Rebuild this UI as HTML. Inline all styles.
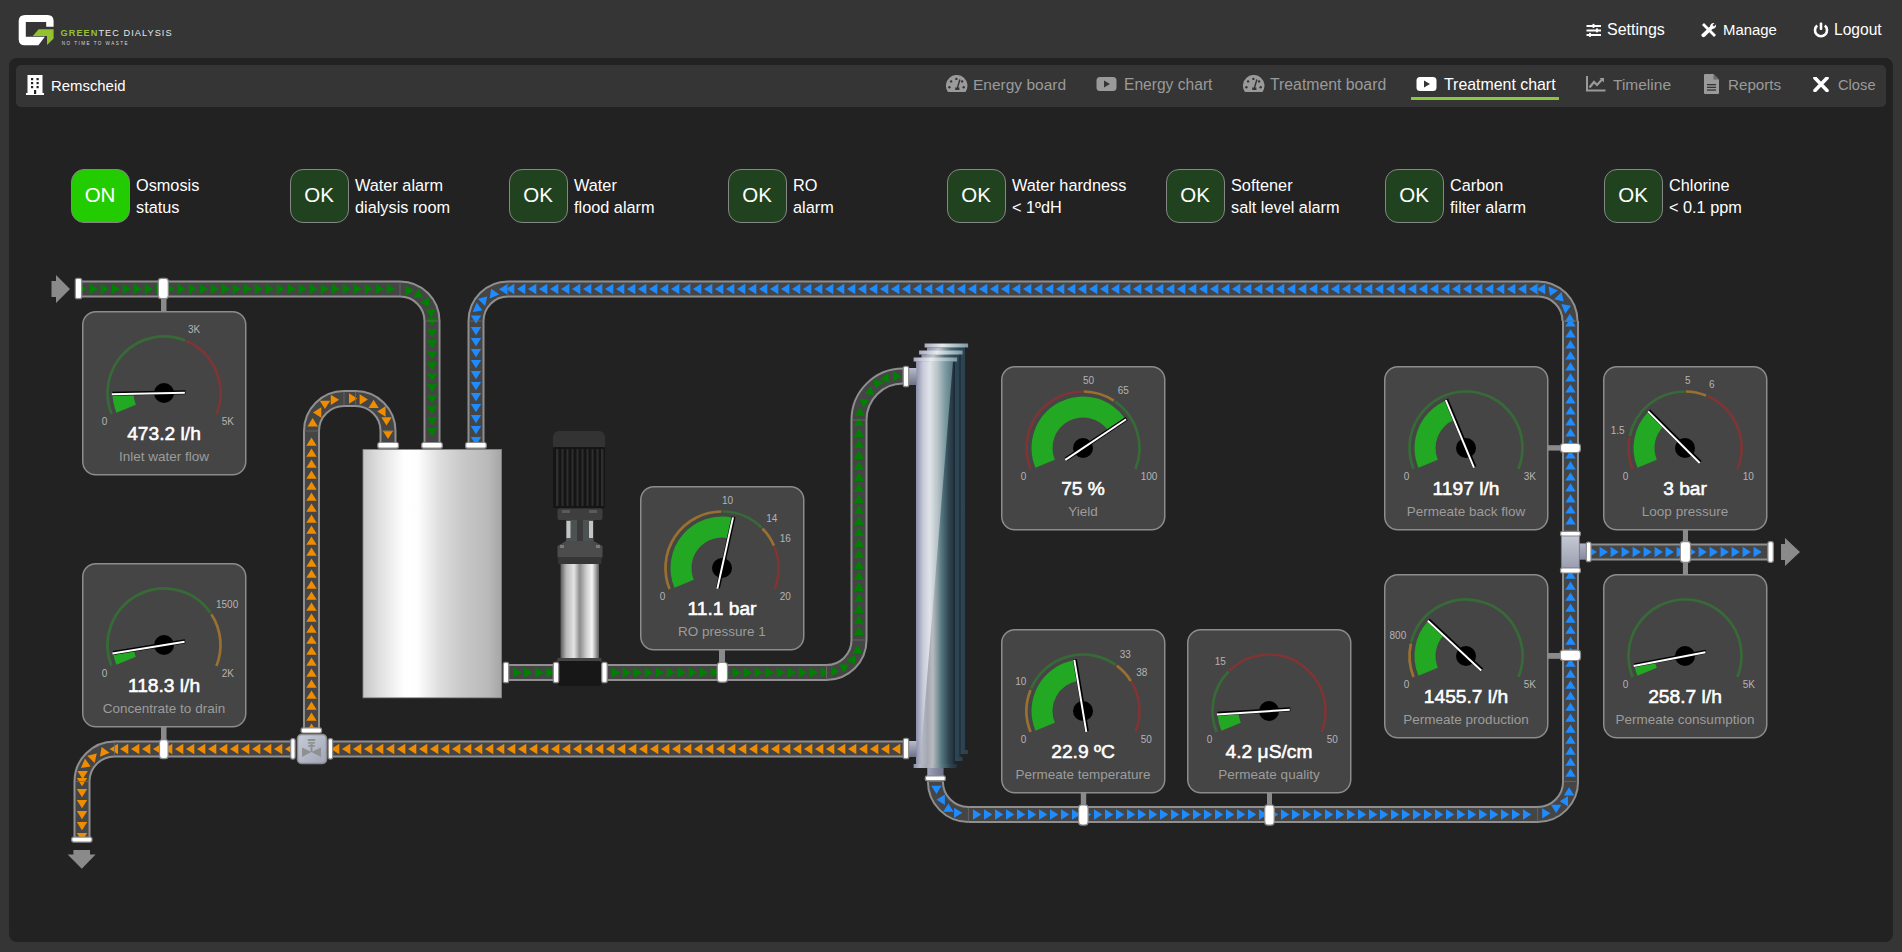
<!DOCTYPE html>
<html><head><meta charset="utf-8"><title>Treatment chart</title>
<style>
html,body{margin:0;padding:0}
body{width:1902px;height:952px;background:#353535;overflow:hidden;position:relative;font-family:"Liberation Sans",sans-serif;color:#fff}
.abs{position:absolute}
.menu{position:absolute;top:20px;font-size:16px;color:#fff;white-space:nowrap;line-height:20px}
.panel{position:absolute;left:9px;top:58px;width:1884px;height:884px;background:#222;border-radius:8px}
.bar{position:absolute;left:16px;top:65px;width:1870px;height:42px;background:#353535;border-radius:5px}
.tab{position:absolute;top:75px;font-size:16px;color:#9a9a9a;white-space:nowrap;line-height:20px}
.st{position:absolute;top:168.5px;width:57px;height:52px;border:1.5px solid #868686;border-radius:13px;background:#21421f;color:#fff;font-size:20.5px;line-height:50px;text-align:center}
.sl{position:absolute;top:173.8px;font-size:16.3px;line-height:22px;color:#fff;white-space:nowrap}
svg text{font-family:"Liberation Sans",sans-serif}
</style></head><body>

<svg class="abs" style="left:0;top:0" width="200" height="58" viewBox="0 0 200 58">
<path d="M25 15 H47.6 Q53.6 15 53.6 21 V26.8 H46.2 V22.1 H25.8 V36.8 H44.9 L38.4 45.2 H24.7 Q18.7 45.2 18.7 39.2 V21 Q18.7 15 25 15 Z" fill="#fff"/>
<path d="M38.6 29.2 H53.6 V38.6 L47 44.9 V36 H32.8 Z" fill="#94c12f"/>
<text x="60.5" y="36" font-size="9.2" letter-spacing="1.05" fill="#94c12f" font-weight="bold">GREEN<tspan fill="#e6e6e6" font-weight="normal">TEC DIALYSIS</tspan></text>
<text x="61.8" y="45.3" font-size="4.6" letter-spacing="1.45" fill="#d8d8d8">NO TIME TO WASTE</text>
</svg>
<div class="menu" style="left:1586px">
<svg width="16" height="16" viewBox="0 0 16 16" style="position:absolute;left:0;top:2px"><g fill="#fff"><rect x="0.5" y="3" width="14.5" height="2"/><rect x="0.5" y="7.5" width="14.5" height="2"/><rect x="0.5" y="12" width="14.5" height="2"/><rect x="6.5" y="1.8" width="2" height="4.2" rx="0.8"/><rect x="10" y="6.3" width="2" height="4.2" rx="0.8"/><rect x="3" y="10.8" width="2" height="4.2" rx="0.8"/></g></svg>
<span style="position:absolute;left:21px">Settings</span></div>
<div class="menu" style="left:1701px">
<svg width="16" height="16" viewBox="0 0 16 16" style="position:absolute;left:0;top:2px"><g fill="#fff"><path d="M1 3 L3 1 L13 11 L15 13 L13 15 L11 13 Z"/><path d="M9 4.5 Q9.5 0.5 13.5 1 L11.5 3 L13 4.5 L15 2.5 Q15.5 6.5 11.5 7 L4 14.5 Q2.5 16 1 14.5 Q-0.5 13 1.5 11.5 Z"/></g></svg>
<span style="position:absolute;left:22px;font-size:14.9px">Manage</span></div>
<div class="menu" style="left:1813px">
<svg width="16" height="16" viewBox="0 0 16 16" style="position:absolute;left:0;top:2px"><path d="M4.2 3.6 A6 6 0 1 0 11.8 3.6" stroke="#fff" stroke-width="2.6" fill="none"/><rect x="6.7" y="0.5" width="2.6" height="7.5" rx="1" fill="#fff"/></svg>
<span style="position:absolute;left:21px;font-size:15.6px">Logout</span></div>
<div class="panel"></div><div class="bar"></div>
<svg class="abs" style="left:26px;top:75px" width="18" height="20" viewBox="0 0 18 20">
<rect x="1.5" y="0" width="15" height="19" fill="#fff"/><rect x="0" y="18" width="18" height="2" fill="#fff"/>
<g fill="#222"><rect x="5" y="3" width="2.2" height="2.2"/><rect x="10.5" y="3" width="2.2" height="2.2"/><rect x="5" y="7" width="2.2" height="2.2"/><rect x="10.5" y="7" width="2.2" height="2.2"/><rect x="5" y="11" width="2.2" height="2.2"/><rect x="10.5" y="11" width="2.2" height="2.2"/><rect x="8" y="15" width="2.2" height="4"/></g></svg>
<div class="abs" style="left:51px;top:76px;font-size:14.9px;line-height:20px;color:#fff">Remscheid</div>
<svg class="abs" style="left:945px;top:75px" width="23" height="17" viewBox="0 0 23 17"><path d="M2.9 17 A10.8 10.8 0 1 1 20.5 17 Z" fill="#9a9a9a"/><g fill="#353535"><circle cx="11.4" cy="3.9" r="1.2"/><circle cx="6.1" cy="6.4" r="1.2"/><circle cx="17.1" cy="6.4" r="1.2"/><circle cx="4.4" cy="12.3" r="1.2"/><circle cx="18.7" cy="12.3" r="1.2"/><path d="M14.2 4.3 L15.6 4.8 L13.3 12.6 L14.4 12.6 L14.4 15 L10.2 15 L10.2 12.6 L11.8 12.6 Z"/></g></svg>
<div class="tab" style="left:973px;font-size:15.5px">Energy board</div>
<svg class="abs" style="left:1096px;top:76px" width="22" height="16" viewBox="0 0 22 16"><rect x="0.5" y="1" width="20" height="14" rx="3.5" fill="#9a9a9a"/><path d="M8 4.5 L14 8 L8 11.5 Z" fill="#353535"/></svg>
<div class="tab" style="left:1124px;font-size:15.6px">Energy chart</div>
<svg class="abs" style="left:1242px;top:75px" width="23" height="17" viewBox="0 0 23 17"><path d="M2.9 17 A10.8 10.8 0 1 1 20.5 17 Z" fill="#9a9a9a"/><g fill="#353535"><circle cx="11.4" cy="3.9" r="1.2"/><circle cx="6.1" cy="6.4" r="1.2"/><circle cx="17.1" cy="6.4" r="1.2"/><circle cx="4.4" cy="12.3" r="1.2"/><circle cx="18.7" cy="12.3" r="1.2"/><path d="M14.2 4.3 L15.6 4.8 L13.3 12.6 L14.4 12.6 L14.4 15 L10.2 15 L10.2 12.6 L11.8 12.6 Z"/></g></svg>
<div class="tab" style="left:1270px;font-size:15.8px">Treatment board</div>
<svg class="abs" style="left:1416px;top:76px" width="22" height="16" viewBox="0 0 22 16"><rect x="0.5" y="1" width="20" height="14" rx="3.5" fill="#fff"/><path d="M8 4.5 L14 8 L8 11.5 Z" fill="#353535"/></svg>
<div class="tab" style="left:1444px;color:#fff;font-size:15.9px">Treatment chart</div>
<div class="abs" style="left:1411px;top:97px;width:148px;height:3px;background:#8dc63f"></div>
<svg class="abs" style="left:1586px;top:76px" width="20" height="16" viewBox="0 0 20 16"><path d="M1 0 V14.5 H19.5" stroke="#9a9a9a" stroke-width="2" fill="none"/><path d="M3.5 11.5 L8 6 L11 9 L16.5 3" stroke="#9a9a9a" stroke-width="2.2" fill="none"/><path d="M13.5 2 H18 V6.5 Z" fill="#9a9a9a"/></svg>
<div class="tab" style="left:1613px;font-size:15.5px">Timeline</div>
<svg class="abs" style="left:1703px;top:74px" width="17" height="20" viewBox="0 0 17 20"><path d="M1 1 Q1 0 2 0 H10.5 L16 5.5 V19 Q16 20 15 20 H2 Q1 20 1 19 Z" fill="#9a9a9a"/><path d="M10.5 0 V5.5 H16" fill="#6a6a6a"/><g fill="#353535"><rect x="4" y="10" width="9" height="1.3"/><rect x="4" y="12.7" width="9" height="1.3"/><rect x="4" y="15.4" width="9" height="1.3"/></g></svg>
<div class="tab" style="left:1728px;font-size:15.2px">Reports</div>
<svg class="abs" style="left:1813px;top:77px" width="16" height="15" viewBox="0 0 16 15"><path d="M2 1 L14 13.5 M14 1 L2 13.5" stroke="#fff" stroke-width="3.6" stroke-linecap="round"/></svg>
<div class="tab" style="left:1838px;font-size:14.7px">Close</div>
<div class="st" style="left:70.5px;background:#22cc00">ON</div>
<div class="sl" style="left:136px">Osmosis<br>status</div>
<div class="st" style="left:289.5px;background:#21421f">OK</div>
<div class="sl" style="left:355px">Water alarm<br>dialysis room</div>
<div class="st" style="left:508.5px;background:#21421f">OK</div>
<div class="sl" style="left:574px">Water<br>flood alarm</div>
<div class="st" style="left:727.5px;background:#21421f">OK</div>
<div class="sl" style="left:793px">RO<br>alarm</div>
<div class="st" style="left:946.5px;background:#21421f">OK</div>
<div class="sl" style="left:1012px">Water hardness<br>&lt; 1&#186;dH</div>
<div class="st" style="left:1165.5px;background:#21421f">OK</div>
<div class="sl" style="left:1231px">Softener<br>salt level alarm</div>
<div class="st" style="left:1384.5px;background:#21421f">OK</div>
<div class="sl" style="left:1450px">Carbon<br>filter alarm</div>
<div class="st" style="left:1603.5px;background:#21421f">OK</div>
<div class="sl" style="left:1669px">Chlorine<br>&lt; 0.1 ppm</div>
<svg class="abs" style="left:0;top:0" width="1902" height="952" viewBox="0 0 1902 952">
<defs>
<linearGradient id="tank" x1="0" x2="1" y1="0" y2="0">
<stop offset="0" stop-color="#c6c6c6"/><stop offset="0.1" stop-color="#dcdcdc"/><stop offset="0.25" stop-color="#f6f6f6"/><stop offset="0.3" stop-color="#ffffff"/>
<stop offset="0.4" stop-color="#fdfdfd"/><stop offset="0.55" stop-color="#dedede"/><stop offset="0.72" stop-color="#c8c8c8"/><stop offset="0.9" stop-color="#bababa"/><stop offset="1" stop-color="#a6a6a6"/></linearGradient>
<linearGradient id="memA" x1="0" x2="1" y1="0" y2="0">
<stop offset="0" stop-color="#8a8ea8"/><stop offset="0.15" stop-color="#b4b8c4"/><stop offset="0.3" stop-color="#a4a8b2"/><stop offset="0.43" stop-color="#b8bcc0"/>
<stop offset="0.65" stop-color="#567880"/><stop offset="0.85" stop-color="#2e4450"/><stop offset="1" stop-color="#22303c"/></linearGradient>
<linearGradient id="memB" gradientUnits="userSpaceOnUse" x1="916" x2="955" y1="0" y2="0">
<stop offset="0" stop-color="#8a8ea8"/><stop offset="0.18" stop-color="#c8cad8"/><stop offset="0.35" stop-color="#e0e4e8"/>
<stop offset="0.55" stop-color="#b8c4c8"/><stop offset="0.75" stop-color="#7d9aa2"/><stop offset="1" stop-color="#4e6e7a"/></linearGradient>
<linearGradient id="memback" x1="0" x2="1" y1="0" y2="0">
<stop offset="0" stop-color="#8a8ea8"/><stop offset="0.3" stop-color="#c0c4cc"/><stop offset="0.6" stop-color="#4e6c74"/><stop offset="0.85" stop-color="#2e4652"/><stop offset="1" stop-color="#2a4050"/></linearGradient>
<linearGradient id="flange" x1="0" x2="1" y1="0" y2="0">
<stop offset="0" stop-color="#a8acc0"/><stop offset="0.4" stop-color="#e8eaee"/><stop offset="0.75" stop-color="#a8bcc4"/><stop offset="1" stop-color="#7c98a4"/></linearGradient>
<linearGradient id="port" x1="0" x2="0" y1="0" y2="1">
<stop offset="0" stop-color="#b8bccb"/><stop offset="1" stop-color="#6e7288"/></linearGradient>
<linearGradient id="portv" x1="0" x2="1" y1="0" y2="0">
<stop offset="0" stop-color="#a0a4b8"/><stop offset="1" stop-color="#6e7288"/></linearGradient>
<linearGradient id="steel" x1="0" x2="1" y1="0" y2="0">
<stop offset="0" stop-color="#5a5a5a"/><stop offset="0.15" stop-color="#b8b8b8"/><stop offset="0.35" stop-color="#e4e4e4"/>
<stop offset="0.5" stop-color="#8c8c8c"/><stop offset="0.68" stop-color="#d0d0d0"/><stop offset="0.82" stop-color="#f4f4f4"/><stop offset="1" stop-color="#5c5c5c"/></linearGradient>
<linearGradient id="tbody" x1="0" x2="0" y1="0" y2="1">
<stop offset="0" stop-color="#c6cad6"/><stop offset="0.5" stop-color="#b0b4c2"/><stop offset="1" stop-color="#9a9eb0"/></linearGradient>
<linearGradient id="tside" x1="0" x2="0" y1="0" y2="1">
<stop offset="0" stop-color="#b0b4c4"/><stop offset="1" stop-color="#868aa0"/></linearGradient>
<linearGradient id="valve" x1="0" x2="1" y1="0" y2="1">
<stop offset="0" stop-color="#c8ccd8"/><stop offset="1" stop-color="#a0a6b8"/></linearGradient>
</defs>
<path d="M51.5 281 H56 V275 L70 289 L56 303 V297 H51.5 Z" fill="#8a8a8a"/>
<path d="M1781 544 H1785 V538 L1800 552 L1785 566 V560 H1781 Z" fill="#8a8a8a"/>
<path d="M73.4 850 H90 V854.5 H95.6 L81.8 868.7 L67.6 854.5 H73.4 Z" fill="#8a8a8a"/>
<path d="M82 289L400 289M400 289A32 32 0 0 1 432 321M432 321L432 443" stroke="#8f8f8f" stroke-width="17" fill="none"/>
<path d="M82 289L400 289M400 289A32 32 0 0 1 432 321M432 321L432 443" stroke="#454545" stroke-width="13" fill="none"/>
<polygon points="78.7,283.8 87,289 78.7,294.2" fill="#008000"/><polygon points="89.7,283.8 98,289 89.7,294.2" fill="#008000"/><polygon points="100.7,283.8 109,289 100.7,294.2" fill="#008000"/><polygon points="111.7,283.8 120,289 111.7,294.2" fill="#008000"/><polygon points="122.7,283.8 131,289 122.7,294.2" fill="#008000"/><polygon points="133.7,283.8 142,289 133.7,294.2" fill="#008000"/><polygon points="144.7,283.8 153,289 144.7,294.2" fill="#008000"/><polygon points="155.7,283.8 164,289 155.7,294.2" fill="#008000"/><polygon points="166.7,283.8 175,289 166.7,294.2" fill="#008000"/><polygon points="177.7,283.8 186,289 177.7,294.2" fill="#008000"/><polygon points="188.7,283.8 197,289 188.7,294.2" fill="#008000"/><polygon points="199.7,283.8 208,289 199.7,294.2" fill="#008000"/><polygon points="210.7,283.8 219,289 210.7,294.2" fill="#008000"/><polygon points="221.7,283.8 230,289 221.7,294.2" fill="#008000"/><polygon points="232.7,283.8 241,289 232.7,294.2" fill="#008000"/><polygon points="243.7,283.8 252,289 243.7,294.2" fill="#008000"/><polygon points="254.7,283.8 263,289 254.7,294.2" fill="#008000"/><polygon points="265.7,283.8 274,289 265.7,294.2" fill="#008000"/><polygon points="276.7,283.8 285,289 276.7,294.2" fill="#008000"/><polygon points="287.7,283.8 296,289 287.7,294.2" fill="#008000"/><polygon points="298.7,283.8 307,289 298.7,294.2" fill="#008000"/><polygon points="309.7,283.8 318,289 309.7,294.2" fill="#008000"/><polygon points="320.7,283.8 329,289 320.7,294.2" fill="#008000"/><polygon points="331.7,283.8 340,289 331.7,294.2" fill="#008000"/><polygon points="342.7,283.8 351,289 342.7,294.2" fill="#008000"/><polygon points="353.7,283.8 362,289 353.7,294.2" fill="#008000"/><polygon points="364.7,283.8 373,289 364.7,294.2" fill="#008000"/><polygon points="375.7,283.8 384,289 375.7,294.2" fill="#008000"/><polygon points="386.7,283.8 395,289 386.7,294.2" fill="#008000"/><polygon points="405.46,285.23 413.76,290.43 405.46,295.63" fill="#008000"/><polygon points="418.34,288.9 422.93,297.55 413.14,297.91" fill="#008000"/><polygon points="429.21,297.31 428.86,307.1 420.21,302.51" fill="#008000"/><polygon points="436.29,309.41 431.09,317.71 425.89,309.41" fill="#008000"/><polygon points="437.2,318.2 432,326.5 426.8,318.2" fill="#008000"/><polygon points="437.2,329.2 432,337.5 426.8,329.2" fill="#008000"/><polygon points="437.2,340.2 432,348.5 426.8,340.2" fill="#008000"/><polygon points="437.2,351.2 432,359.5 426.8,351.2" fill="#008000"/><polygon points="437.2,362.2 432,370.5 426.8,362.2" fill="#008000"/><polygon points="437.2,373.2 432,381.5 426.8,373.2" fill="#008000"/><polygon points="437.2,384.2 432,392.5 426.8,384.2" fill="#008000"/><polygon points="437.2,395.2 432,403.5 426.8,395.2" fill="#008000"/><polygon points="437.2,406.2 432,414.5 426.8,406.2" fill="#008000"/><polygon points="437.2,417.2 432,425.5 426.8,417.2" fill="#008000"/><polygon points="437.2,428.2 432,436.5 426.8,428.2" fill="#008000"/>
<path d="M400 296L400 282M425 321L439 321" stroke="#6a6a6a" stroke-width="0.8" fill="none"/>
<path d="M476 443L476 321M476 321A32 32 0 0 1 508 289M508 289L1538 289M1538 289A32 32 0 0 1 1570 321M1570.5 321L1570.5 531" stroke="#8f8f8f" stroke-width="17" fill="none"/>
<path d="M476 443L476 321M476 321A32 32 0 0 1 508 289M508 289L1538 289M1538 289A32 32 0 0 1 1570 321M1570.5 321L1570.5 531" stroke="#454545" stroke-width="13" fill="none"/>
<polygon points="481.2,436.9 476,445.2 470.8,436.9" fill="#1e8cff"/><polygon points="481.2,425.9 476,434.2 470.8,425.9" fill="#1e8cff"/><polygon points="481.2,414.9 476,423.2 470.8,414.9" fill="#1e8cff"/><polygon points="481.2,403.9 476,412.2 470.8,403.9" fill="#1e8cff"/><polygon points="481.2,392.9 476,401.2 470.8,392.9" fill="#1e8cff"/><polygon points="481.2,381.9 476,390.2 470.8,381.9" fill="#1e8cff"/><polygon points="481.2,370.9 476,379.2 470.8,370.9" fill="#1e8cff"/><polygon points="481.2,359.9 476,368.2 470.8,359.9" fill="#1e8cff"/><polygon points="481.2,348.9 476,357.2 470.8,348.9" fill="#1e8cff"/><polygon points="481.2,337.9 476,346.2 470.8,337.9" fill="#1e8cff"/><polygon points="481.2,326.9 476,335.2 470.8,326.9" fill="#1e8cff"/><polygon points="481.24,315.5 476.04,323.8 470.84,315.5" fill="#1e8cff"/><polygon points="476.7,302.48 482.38,310.46 472.73,312.09" fill="#1e8cff"/><polygon points="477.74,298.71 487.29,296.52 485.1,306.06" fill="#1e8cff"/><polygon points="489.59,298.49 491.22,288.83 499.2,294.51" fill="#1e8cff"/><polygon points="507.25,294.55 498.95,289.35 507.25,284.15" fill="#1e8cff"/><polygon points="514.3,294.2 506,289 514.3,283.8" fill="#1e8cff"/><polygon points="525.3,294.2 517,289 525.3,283.8" fill="#1e8cff"/><polygon points="536.3,294.2 528,289 536.3,283.8" fill="#1e8cff"/><polygon points="547.3,294.2 539,289 547.3,283.8" fill="#1e8cff"/><polygon points="558.3,294.2 550,289 558.3,283.8" fill="#1e8cff"/><polygon points="569.3,294.2 561,289 569.3,283.8" fill="#1e8cff"/><polygon points="580.3,294.2 572,289 580.3,283.8" fill="#1e8cff"/><polygon points="591.3,294.2 583,289 591.3,283.8" fill="#1e8cff"/><polygon points="602.3,294.2 594,289 602.3,283.8" fill="#1e8cff"/><polygon points="613.3,294.2 605,289 613.3,283.8" fill="#1e8cff"/><polygon points="624.3,294.2 616,289 624.3,283.8" fill="#1e8cff"/><polygon points="635.3,294.2 627,289 635.3,283.8" fill="#1e8cff"/><polygon points="646.3,294.2 638,289 646.3,283.8" fill="#1e8cff"/><polygon points="657.3,294.2 649,289 657.3,283.8" fill="#1e8cff"/><polygon points="668.3,294.2 660,289 668.3,283.8" fill="#1e8cff"/><polygon points="679.3,294.2 671,289 679.3,283.8" fill="#1e8cff"/><polygon points="690.3,294.2 682,289 690.3,283.8" fill="#1e8cff"/><polygon points="701.3,294.2 693,289 701.3,283.8" fill="#1e8cff"/><polygon points="712.3,294.2 704,289 712.3,283.8" fill="#1e8cff"/><polygon points="723.3,294.2 715,289 723.3,283.8" fill="#1e8cff"/><polygon points="734.3,294.2 726,289 734.3,283.8" fill="#1e8cff"/><polygon points="745.3,294.2 737,289 745.3,283.8" fill="#1e8cff"/><polygon points="756.3,294.2 748,289 756.3,283.8" fill="#1e8cff"/><polygon points="767.3,294.2 759,289 767.3,283.8" fill="#1e8cff"/><polygon points="778.3,294.2 770,289 778.3,283.8" fill="#1e8cff"/><polygon points="789.3,294.2 781,289 789.3,283.8" fill="#1e8cff"/><polygon points="800.3,294.2 792,289 800.3,283.8" fill="#1e8cff"/><polygon points="811.3,294.2 803,289 811.3,283.8" fill="#1e8cff"/><polygon points="822.3,294.2 814,289 822.3,283.8" fill="#1e8cff"/><polygon points="833.3,294.2 825,289 833.3,283.8" fill="#1e8cff"/><polygon points="844.3,294.2 836,289 844.3,283.8" fill="#1e8cff"/><polygon points="855.3,294.2 847,289 855.3,283.8" fill="#1e8cff"/><polygon points="866.3,294.2 858,289 866.3,283.8" fill="#1e8cff"/><polygon points="877.3,294.2 869,289 877.3,283.8" fill="#1e8cff"/><polygon points="888.3,294.2 880,289 888.3,283.8" fill="#1e8cff"/><polygon points="899.3,294.2 891,289 899.3,283.8" fill="#1e8cff"/><polygon points="910.3,294.2 902,289 910.3,283.8" fill="#1e8cff"/><polygon points="921.3,294.2 913,289 921.3,283.8" fill="#1e8cff"/><polygon points="932.3,294.2 924,289 932.3,283.8" fill="#1e8cff"/><polygon points="943.3,294.2 935,289 943.3,283.8" fill="#1e8cff"/><polygon points="954.3,294.2 946,289 954.3,283.8" fill="#1e8cff"/><polygon points="965.3,294.2 957,289 965.3,283.8" fill="#1e8cff"/><polygon points="976.3,294.2 968,289 976.3,283.8" fill="#1e8cff"/><polygon points="987.3,294.2 979,289 987.3,283.8" fill="#1e8cff"/><polygon points="998.3,294.2 990,289 998.3,283.8" fill="#1e8cff"/><polygon points="1009.3,294.2 1001,289 1009.3,283.8" fill="#1e8cff"/><polygon points="1020.3,294.2 1012,289 1020.3,283.8" fill="#1e8cff"/><polygon points="1031.3,294.2 1023,289 1031.3,283.8" fill="#1e8cff"/><polygon points="1042.3,294.2 1034,289 1042.3,283.8" fill="#1e8cff"/><polygon points="1053.3,294.2 1045,289 1053.3,283.8" fill="#1e8cff"/><polygon points="1064.3,294.2 1056,289 1064.3,283.8" fill="#1e8cff"/><polygon points="1075.3,294.2 1067,289 1075.3,283.8" fill="#1e8cff"/><polygon points="1086.3,294.2 1078,289 1086.3,283.8" fill="#1e8cff"/><polygon points="1097.3,294.2 1089,289 1097.3,283.8" fill="#1e8cff"/><polygon points="1108.3,294.2 1100,289 1108.3,283.8" fill="#1e8cff"/><polygon points="1119.3,294.2 1111,289 1119.3,283.8" fill="#1e8cff"/><polygon points="1130.3,294.2 1122,289 1130.3,283.8" fill="#1e8cff"/><polygon points="1141.3,294.2 1133,289 1141.3,283.8" fill="#1e8cff"/><polygon points="1152.3,294.2 1144,289 1152.3,283.8" fill="#1e8cff"/><polygon points="1163.3,294.2 1155,289 1163.3,283.8" fill="#1e8cff"/><polygon points="1174.3,294.2 1166,289 1174.3,283.8" fill="#1e8cff"/><polygon points="1185.3,294.2 1177,289 1185.3,283.8" fill="#1e8cff"/><polygon points="1196.3,294.2 1188,289 1196.3,283.8" fill="#1e8cff"/><polygon points="1207.3,294.2 1199,289 1207.3,283.8" fill="#1e8cff"/><polygon points="1218.3,294.2 1210,289 1218.3,283.8" fill="#1e8cff"/><polygon points="1229.3,294.2 1221,289 1229.3,283.8" fill="#1e8cff"/><polygon points="1240.3,294.2 1232,289 1240.3,283.8" fill="#1e8cff"/><polygon points="1251.3,294.2 1243,289 1251.3,283.8" fill="#1e8cff"/><polygon points="1262.3,294.2 1254,289 1262.3,283.8" fill="#1e8cff"/><polygon points="1273.3,294.2 1265,289 1273.3,283.8" fill="#1e8cff"/><polygon points="1284.3,294.2 1276,289 1284.3,283.8" fill="#1e8cff"/><polygon points="1295.3,294.2 1287,289 1295.3,283.8" fill="#1e8cff"/><polygon points="1306.3,294.2 1298,289 1306.3,283.8" fill="#1e8cff"/><polygon points="1317.3,294.2 1309,289 1317.3,283.8" fill="#1e8cff"/><polygon points="1328.3,294.2 1320,289 1328.3,283.8" fill="#1e8cff"/><polygon points="1339.3,294.2 1331,289 1339.3,283.8" fill="#1e8cff"/><polygon points="1350.3,294.2 1342,289 1350.3,283.8" fill="#1e8cff"/><polygon points="1361.3,294.2 1353,289 1361.3,283.8" fill="#1e8cff"/><polygon points="1372.3,294.2 1364,289 1372.3,283.8" fill="#1e8cff"/><polygon points="1383.3,294.2 1375,289 1383.3,283.8" fill="#1e8cff"/><polygon points="1394.3,294.2 1386,289 1394.3,283.8" fill="#1e8cff"/><polygon points="1405.3,294.2 1397,289 1405.3,283.8" fill="#1e8cff"/><polygon points="1416.3,294.2 1408,289 1416.3,283.8" fill="#1e8cff"/><polygon points="1427.3,294.2 1419,289 1427.3,283.8" fill="#1e8cff"/><polygon points="1438.3,294.2 1430,289 1438.3,283.8" fill="#1e8cff"/><polygon points="1449.3,294.2 1441,289 1449.3,283.8" fill="#1e8cff"/><polygon points="1460.3,294.2 1452,289 1460.3,283.8" fill="#1e8cff"/><polygon points="1471.3,294.2 1463,289 1471.3,283.8" fill="#1e8cff"/><polygon points="1482.3,294.2 1474,289 1482.3,283.8" fill="#1e8cff"/><polygon points="1493.3,294.2 1485,289 1493.3,283.8" fill="#1e8cff"/><polygon points="1504.3,294.2 1496,289 1504.3,283.8" fill="#1e8cff"/><polygon points="1515.3,294.2 1507,289 1515.3,283.8" fill="#1e8cff"/><polygon points="1526.3,294.2 1518,289 1526.3,283.8" fill="#1e8cff"/><polygon points="1537.3,294.2 1529,289 1537.3,283.8" fill="#1e8cff"/><polygon points="1545.19,294.36 1536.89,289.16 1545.19,283.96" fill="#1e8cff"/><polygon points="1558.07,290.39 1550.09,296.07 1548.47,286.41" fill="#1e8cff"/><polygon points="1561.52,291.91 1563.72,301.46 1554.17,299.27" fill="#1e8cff"/><polygon points="1561.27,304.11 1570.93,305.74 1565.25,313.72" fill="#1e8cff"/><polygon points="1564.65,321.94 1569.85,313.64 1575.05,321.94" fill="#1e8cff"/><polygon points="1565.3,326.5 1570.5,318.2 1575.7,326.5" fill="#1e8cff"/><polygon points="1565.3,337.5 1570.5,329.2 1575.7,337.5" fill="#1e8cff"/><polygon points="1565.3,348.5 1570.5,340.2 1575.7,348.5" fill="#1e8cff"/><polygon points="1565.3,359.5 1570.5,351.2 1575.7,359.5" fill="#1e8cff"/><polygon points="1565.3,370.5 1570.5,362.2 1575.7,370.5" fill="#1e8cff"/><polygon points="1565.3,381.5 1570.5,373.2 1575.7,381.5" fill="#1e8cff"/><polygon points="1565.3,392.5 1570.5,384.2 1575.7,392.5" fill="#1e8cff"/><polygon points="1565.3,403.5 1570.5,395.2 1575.7,403.5" fill="#1e8cff"/><polygon points="1565.3,414.5 1570.5,406.2 1575.7,414.5" fill="#1e8cff"/><polygon points="1565.3,425.5 1570.5,417.2 1575.7,425.5" fill="#1e8cff"/><polygon points="1565.3,436.5 1570.5,428.2 1575.7,436.5" fill="#1e8cff"/><polygon points="1565.3,447.5 1570.5,439.2 1575.7,447.5" fill="#1e8cff"/><polygon points="1565.3,458.5 1570.5,450.2 1575.7,458.5" fill="#1e8cff"/><polygon points="1565.3,469.5 1570.5,461.2 1575.7,469.5" fill="#1e8cff"/><polygon points="1565.3,480.5 1570.5,472.2 1575.7,480.5" fill="#1e8cff"/><polygon points="1565.3,491.5 1570.5,483.2 1575.7,491.5" fill="#1e8cff"/><polygon points="1565.3,502.5 1570.5,494.2 1575.7,502.5" fill="#1e8cff"/><polygon points="1565.3,513.5 1570.5,505.2 1575.7,513.5" fill="#1e8cff"/><polygon points="1565.3,524.5 1570.5,516.2 1575.7,524.5" fill="#1e8cff"/>
<path d="M483 321L469 321M508 296L508 282M1538 296L1538 282M1563 321L1577 321" stroke="#6a6a6a" stroke-width="0.8" fill="none"/>
<path d="M311.5 728L311.5 431M311.5 431A32.5 32.5 0 0 1 344 398.5M344 398.5L355.5 398.5M355.5 398.5A32.5 32.5 0 0 1 388 431M388 431L388 442" stroke="#8f8f8f" stroke-width="17" fill="none"/>
<path d="M311.5 728L311.5 431M311.5 431A32.5 32.5 0 0 1 344 398.5M344 398.5L355.5 398.5M355.5 398.5A32.5 32.5 0 0 1 388 431M388 431L388 442" stroke="#454545" stroke-width="13" fill="none"/>
<polygon points="306.3,731.8 311.5,723.5 316.7,731.8" fill="#f08c00"/><polygon points="306.3,720.8 311.5,712.5 316.7,720.8" fill="#f08c00"/><polygon points="306.3,709.8 311.5,701.5 316.7,709.8" fill="#f08c00"/><polygon points="306.3,698.8 311.5,690.5 316.7,698.8" fill="#f08c00"/><polygon points="306.3,687.8 311.5,679.5 316.7,687.8" fill="#f08c00"/><polygon points="306.3,676.8 311.5,668.5 316.7,676.8" fill="#f08c00"/><polygon points="306.3,665.8 311.5,657.5 316.7,665.8" fill="#f08c00"/><polygon points="306.3,654.8 311.5,646.5 316.7,654.8" fill="#f08c00"/><polygon points="306.3,643.8 311.5,635.5 316.7,643.8" fill="#f08c00"/><polygon points="306.3,632.8 311.5,624.5 316.7,632.8" fill="#f08c00"/><polygon points="306.3,621.8 311.5,613.5 316.7,621.8" fill="#f08c00"/><polygon points="306.3,610.8 311.5,602.5 316.7,610.8" fill="#f08c00"/><polygon points="306.3,599.8 311.5,591.5 316.7,599.8" fill="#f08c00"/><polygon points="306.3,588.8 311.5,580.5 316.7,588.8" fill="#f08c00"/><polygon points="306.3,577.8 311.5,569.5 316.7,577.8" fill="#f08c00"/><polygon points="306.3,566.8 311.5,558.5 316.7,566.8" fill="#f08c00"/><polygon points="306.3,555.8 311.5,547.5 316.7,555.8" fill="#f08c00"/><polygon points="306.3,544.8 311.5,536.5 316.7,544.8" fill="#f08c00"/><polygon points="306.3,533.8 311.5,525.5 316.7,533.8" fill="#f08c00"/><polygon points="306.3,522.8 311.5,514.5 316.7,522.8" fill="#f08c00"/><polygon points="306.3,511.8 311.5,503.5 316.7,511.8" fill="#f08c00"/><polygon points="306.3,500.8 311.5,492.5 316.7,500.8" fill="#f08c00"/><polygon points="306.3,489.8 311.5,481.5 316.7,489.8" fill="#f08c00"/><polygon points="306.3,478.8 311.5,470.5 316.7,478.8" fill="#f08c00"/><polygon points="306.3,467.8 311.5,459.5 316.7,467.8" fill="#f08c00"/><polygon points="306.3,456.8 311.5,448.5 316.7,456.8" fill="#f08c00"/><polygon points="306.3,445.8 311.5,437.5 316.7,445.8" fill="#f08c00"/><polygon points="307.46,426.4 312.66,418.1 317.86,426.4" fill="#f08c00"/><polygon points="321.29,417.68 312.99,412.48 321.29,407.28" fill="#f08c00"/><polygon points="330.15,400.67 324.95,408.97 319.75,400.67" fill="#f08c00"/><polygon points="330.78,394.64 339.08,399.84 330.78,405.04" fill="#f08c00"/><polygon points="349,393.3 357.3,398.5 349,403.7" fill="#f08c00"/><polygon points="359.61,394.33 367.91,399.53 359.61,404.73" fill="#f08c00"/><polygon points="368.4,408.01 373.6,399.71 378.8,408.01" fill="#f08c00"/><polygon points="385.54,416.75 377.24,411.55 385.54,406.35" fill="#f08c00"/><polygon points="391.72,417.3 386.52,425.6 381.32,417.3" fill="#f08c00"/><polygon points="393.2,430.7 388,439 382.8,430.7" fill="#f08c00"/>
<path d="M318.5 431L304.5 431M344 405.5L344 391.5M355.5 405.5L355.5 391.5M381 431L395 431" stroke="#6a6a6a" stroke-width="0.8" fill="none"/>
<path d="M903 749L333 749" stroke="#8f8f8f" stroke-width="17" fill="none"/>
<path d="M903 749L333 749" stroke="#454545" stroke-width="13" fill="none"/>
<polygon points="900.3,754.2 892,749 900.3,743.8" fill="#f08c00"/><polygon points="889.3,754.2 881,749 889.3,743.8" fill="#f08c00"/><polygon points="878.3,754.2 870,749 878.3,743.8" fill="#f08c00"/><polygon points="867.3,754.2 859,749 867.3,743.8" fill="#f08c00"/><polygon points="856.3,754.2 848,749 856.3,743.8" fill="#f08c00"/><polygon points="845.3,754.2 837,749 845.3,743.8" fill="#f08c00"/><polygon points="834.3,754.2 826,749 834.3,743.8" fill="#f08c00"/><polygon points="823.3,754.2 815,749 823.3,743.8" fill="#f08c00"/><polygon points="812.3,754.2 804,749 812.3,743.8" fill="#f08c00"/><polygon points="801.3,754.2 793,749 801.3,743.8" fill="#f08c00"/><polygon points="790.3,754.2 782,749 790.3,743.8" fill="#f08c00"/><polygon points="779.3,754.2 771,749 779.3,743.8" fill="#f08c00"/><polygon points="768.3,754.2 760,749 768.3,743.8" fill="#f08c00"/><polygon points="757.3,754.2 749,749 757.3,743.8" fill="#f08c00"/><polygon points="746.3,754.2 738,749 746.3,743.8" fill="#f08c00"/><polygon points="735.3,754.2 727,749 735.3,743.8" fill="#f08c00"/><polygon points="724.3,754.2 716,749 724.3,743.8" fill="#f08c00"/><polygon points="713.3,754.2 705,749 713.3,743.8" fill="#f08c00"/><polygon points="702.3,754.2 694,749 702.3,743.8" fill="#f08c00"/><polygon points="691.3,754.2 683,749 691.3,743.8" fill="#f08c00"/><polygon points="680.3,754.2 672,749 680.3,743.8" fill="#f08c00"/><polygon points="669.3,754.2 661,749 669.3,743.8" fill="#f08c00"/><polygon points="658.3,754.2 650,749 658.3,743.8" fill="#f08c00"/><polygon points="647.3,754.2 639,749 647.3,743.8" fill="#f08c00"/><polygon points="636.3,754.2 628,749 636.3,743.8" fill="#f08c00"/><polygon points="625.3,754.2 617,749 625.3,743.8" fill="#f08c00"/><polygon points="614.3,754.2 606,749 614.3,743.8" fill="#f08c00"/><polygon points="603.3,754.2 595,749 603.3,743.8" fill="#f08c00"/><polygon points="592.3,754.2 584,749 592.3,743.8" fill="#f08c00"/><polygon points="581.3,754.2 573,749 581.3,743.8" fill="#f08c00"/><polygon points="570.3,754.2 562,749 570.3,743.8" fill="#f08c00"/><polygon points="559.3,754.2 551,749 559.3,743.8" fill="#f08c00"/><polygon points="548.3,754.2 540,749 548.3,743.8" fill="#f08c00"/><polygon points="537.3,754.2 529,749 537.3,743.8" fill="#f08c00"/><polygon points="526.3,754.2 518,749 526.3,743.8" fill="#f08c00"/><polygon points="515.3,754.2 507,749 515.3,743.8" fill="#f08c00"/><polygon points="504.3,754.2 496,749 504.3,743.8" fill="#f08c00"/><polygon points="493.3,754.2 485,749 493.3,743.8" fill="#f08c00"/><polygon points="482.3,754.2 474,749 482.3,743.8" fill="#f08c00"/><polygon points="471.3,754.2 463,749 471.3,743.8" fill="#f08c00"/><polygon points="460.3,754.2 452,749 460.3,743.8" fill="#f08c00"/><polygon points="449.3,754.2 441,749 449.3,743.8" fill="#f08c00"/><polygon points="438.3,754.2 430,749 438.3,743.8" fill="#f08c00"/><polygon points="427.3,754.2 419,749 427.3,743.8" fill="#f08c00"/><polygon points="416.3,754.2 408,749 416.3,743.8" fill="#f08c00"/><polygon points="405.3,754.2 397,749 405.3,743.8" fill="#f08c00"/><polygon points="394.3,754.2 386,749 394.3,743.8" fill="#f08c00"/><polygon points="383.3,754.2 375,749 383.3,743.8" fill="#f08c00"/><polygon points="372.3,754.2 364,749 372.3,743.8" fill="#f08c00"/><polygon points="361.3,754.2 353,749 361.3,743.8" fill="#f08c00"/><polygon points="350.3,754.2 342,749 350.3,743.8" fill="#f08c00"/><polygon points="339.3,754.2 331,749 339.3,743.8" fill="#f08c00"/>
<path d="M290 749L114.5 749M114.5 749A32.5 32.5 0 0 0 82 781.5M82 781.5L82 837" stroke="#8f8f8f" stroke-width="17" fill="none"/>
<path d="M290 749L114.5 749M114.5 749A32.5 32.5 0 0 0 82 781.5M82 781.5L82 837" stroke="#454545" stroke-width="13" fill="none"/>
<polygon points="293.3,754.2 285,749 293.3,743.8" fill="#f08c00"/><polygon points="282.3,754.2 274,749 282.3,743.8" fill="#f08c00"/><polygon points="271.3,754.2 263,749 271.3,743.8" fill="#f08c00"/><polygon points="260.3,754.2 252,749 260.3,743.8" fill="#f08c00"/><polygon points="249.3,754.2 241,749 249.3,743.8" fill="#f08c00"/><polygon points="238.3,754.2 230,749 238.3,743.8" fill="#f08c00"/><polygon points="227.3,754.2 219,749 227.3,743.8" fill="#f08c00"/><polygon points="216.3,754.2 208,749 216.3,743.8" fill="#f08c00"/><polygon points="205.3,754.2 197,749 205.3,743.8" fill="#f08c00"/><polygon points="194.3,754.2 186,749 194.3,743.8" fill="#f08c00"/><polygon points="183.3,754.2 175,749 183.3,743.8" fill="#f08c00"/><polygon points="172.3,754.2 164,749 172.3,743.8" fill="#f08c00"/><polygon points="161.3,754.2 153,749 161.3,743.8" fill="#f08c00"/><polygon points="150.3,754.2 142,749 150.3,743.8" fill="#f08c00"/><polygon points="139.3,754.2 131,749 139.3,743.8" fill="#f08c00"/><polygon points="128.3,754.2 120,749 128.3,743.8" fill="#f08c00"/><polygon points="118,754.2 109.7,749 118,743.8" fill="#f08c00"/><polygon points="99.97,756.7 101.59,747.04 109.57,752.72" fill="#f08c00"/><polygon points="87.25,755.63 96.8,753.44 94.6,762.99" fill="#f08c00"/><polygon points="84.92,758.45 90.6,766.44 80.94,768.06" fill="#f08c00"/><polygon points="87.86,770.99 82.66,779.29 77.46,770.99" fill="#f08c00"/><polygon points="87.2,778 82,786.3 76.8,778" fill="#f08c00"/><polygon points="87.2,789 82,797.3 76.8,789" fill="#f08c00"/><polygon points="87.2,800 82,808.3 76.8,800" fill="#f08c00"/><polygon points="87.2,811 82,819.3 76.8,811" fill="#f08c00"/><polygon points="87.2,822 82,830.3 76.8,822" fill="#f08c00"/><polygon points="87.2,833 82,841.3 76.8,833" fill="#f08c00"/>
<path d="M114.5 756L114.5 742M89 781.5L75 781.5" stroke="#6a6a6a" stroke-width="0.8" fill="none"/>
<path d="M509 672.5L553 672.5" stroke="#8f8f8f" stroke-width="17" fill="none"/>
<path d="M509 672.5L553 672.5" stroke="#454545" stroke-width="13" fill="none"/>
<polygon points="513.2,667.3 521.5,672.5 513.2,677.7" fill="#008000"/><polygon points="524.2,667.3 532.5,672.5 524.2,677.7" fill="#008000"/><polygon points="535.2,667.3 543.5,672.5 535.2,677.7" fill="#008000"/><polygon points="546.2,667.3 554.5,672.5 546.2,677.7" fill="#008000"/>
<path d="M607.5 672.5L826.5 672.5M826.5 672.5A32.5 32.5 0 0 0 859 640M859 640L859 420M859 420A44 44 0 0 1 903 376" stroke="#8f8f8f" stroke-width="17" fill="none"/>
<path d="M607.5 672.5L826.5 672.5M826.5 672.5A32.5 32.5 0 0 0 859 640M859 640L859 420M859 420A44 44 0 0 1 903 376" stroke="#454545" stroke-width="13" fill="none"/>
<polygon points="611.7,667.3 620,672.5 611.7,677.7" fill="#008000"/><polygon points="622.7,667.3 631,672.5 622.7,677.7" fill="#008000"/><polygon points="633.7,667.3 642,672.5 633.7,677.7" fill="#008000"/><polygon points="644.7,667.3 653,672.5 644.7,677.7" fill="#008000"/><polygon points="655.7,667.3 664,672.5 655.7,677.7" fill="#008000"/><polygon points="666.7,667.3 675,672.5 666.7,677.7" fill="#008000"/><polygon points="677.7,667.3 686,672.5 677.7,677.7" fill="#008000"/><polygon points="688.7,667.3 697,672.5 688.7,677.7" fill="#008000"/><polygon points="699.7,667.3 708,672.5 699.7,677.7" fill="#008000"/><polygon points="710.7,667.3 719,672.5 710.7,677.7" fill="#008000"/><polygon points="721.7,667.3 730,672.5 721.7,677.7" fill="#008000"/><polygon points="732.7,667.3 741,672.5 732.7,677.7" fill="#008000"/><polygon points="743.7,667.3 752,672.5 743.7,677.7" fill="#008000"/><polygon points="754.7,667.3 763,672.5 754.7,677.7" fill="#008000"/><polygon points="765.7,667.3 774,672.5 765.7,677.7" fill="#008000"/><polygon points="776.7,667.3 785,672.5 776.7,677.7" fill="#008000"/><polygon points="787.7,667.3 796,672.5 787.7,677.7" fill="#008000"/><polygon points="798.7,667.3 807,672.5 798.7,677.7" fill="#008000"/><polygon points="809.7,667.3 818,672.5 809.7,677.7" fill="#008000"/><polygon points="820.7,667.3 829,672.5 820.7,677.7" fill="#008000"/><polygon points="831.1,666.14 839.4,671.34 831.1,676.54" fill="#008000"/><polygon points="838.95,664.21 848.74,664.56 844.15,673.21" fill="#008000"/><polygon points="846.33,659.91 854.98,655.32 855.34,665.11" fill="#008000"/><polygon points="852.46,653.22 857.66,644.92 862.86,653.22" fill="#008000"/><polygon points="853.8,635 859,626.7 864.2,635" fill="#008000"/><polygon points="853.8,624 859,615.7 864.2,624" fill="#008000"/><polygon points="853.8,613 859,604.7 864.2,613" fill="#008000"/><polygon points="853.8,602 859,593.7 864.2,602" fill="#008000"/><polygon points="853.8,591 859,582.7 864.2,591" fill="#008000"/><polygon points="853.8,580 859,571.7 864.2,580" fill="#008000"/><polygon points="853.8,569 859,560.7 864.2,569" fill="#008000"/><polygon points="853.8,558 859,549.7 864.2,558" fill="#008000"/><polygon points="853.8,547 859,538.7 864.2,547" fill="#008000"/><polygon points="853.8,536 859,527.7 864.2,536" fill="#008000"/><polygon points="853.8,525 859,516.7 864.2,525" fill="#008000"/><polygon points="853.8,514 859,505.7 864.2,514" fill="#008000"/><polygon points="853.8,503 859,494.7 864.2,503" fill="#008000"/><polygon points="853.8,492 859,483.7 864.2,492" fill="#008000"/><polygon points="853.8,481 859,472.7 864.2,481" fill="#008000"/><polygon points="853.8,470 859,461.7 864.2,470" fill="#008000"/><polygon points="853.8,459 859,450.7 864.2,459" fill="#008000"/><polygon points="853.8,448 859,439.7 864.2,448" fill="#008000"/><polygon points="853.8,437 859,428.7 864.2,437" fill="#008000"/><polygon points="853.8,426 859,417.7 864.2,426" fill="#008000"/><polygon points="854.56,415.85 859.76,407.55 864.96,415.85" fill="#008000"/><polygon points="863.3,407.96 859.64,398.88 869.42,399.55" fill="#008000"/><polygon points="874.37,395.83 864.87,393.44 871.16,385.93" fill="#008000"/><polygon points="883.1,382.36 875.59,388.65 873.21,379.15" fill="#008000"/><polygon points="888.35,372.92 889.03,382.69 879.94,379.03" fill="#008000"/><polygon points="893.1,371.2 901.4,376.4 893.1,381.6" fill="#008000"/>
<path d="M826.5 665.5L826.5 679.5M852 640L866 640M866 420L852 420M903 383L903 369" stroke="#6a6a6a" stroke-width="0.8" fill="none"/>
<path d="M935.4 781.5A33 33 0 0 0 968.4 814.5M968.4 814.5L1537.6 814.5M1537.6 814.5A33 33 0 0 0 1570.6 781.5M1570.5 781.5L1570.5 573" stroke="#8f8f8f" stroke-width="17" fill="none"/>
<path d="M935.4 781.5A33 33 0 0 0 968.4 814.5M968.4 814.5L1537.6 814.5M1537.6 814.5A33 33 0 0 0 1570.6 781.5M1570.5 781.5L1570.5 573" stroke="#454545" stroke-width="13" fill="none"/>
<polygon points="941.64,785.71 936.44,794.01 931.24,785.71" fill="#1e8cff"/><polygon points="944.88,804.92 936.58,799.72 944.88,794.52" fill="#1e8cff"/><polygon points="943.16,811.72 948.36,803.42 953.56,811.72" fill="#1e8cff"/><polygon points="954.04,807.63 962.34,812.83 954.04,818.03" fill="#1e8cff"/><polygon points="973,809.3 981.3,814.5 973,819.7" fill="#1e8cff"/><polygon points="984,809.3 992.3,814.5 984,819.7" fill="#1e8cff"/><polygon points="995,809.3 1003.3,814.5 995,819.7" fill="#1e8cff"/><polygon points="1006,809.3 1014.3,814.5 1006,819.7" fill="#1e8cff"/><polygon points="1017,809.3 1025.3,814.5 1017,819.7" fill="#1e8cff"/><polygon points="1028,809.3 1036.3,814.5 1028,819.7" fill="#1e8cff"/><polygon points="1039,809.3 1047.3,814.5 1039,819.7" fill="#1e8cff"/><polygon points="1050,809.3 1058.3,814.5 1050,819.7" fill="#1e8cff"/><polygon points="1061,809.3 1069.3,814.5 1061,819.7" fill="#1e8cff"/><polygon points="1072,809.3 1080.3,814.5 1072,819.7" fill="#1e8cff"/><polygon points="1083,809.3 1091.3,814.5 1083,819.7" fill="#1e8cff"/><polygon points="1094,809.3 1102.3,814.5 1094,819.7" fill="#1e8cff"/><polygon points="1105,809.3 1113.3,814.5 1105,819.7" fill="#1e8cff"/><polygon points="1116,809.3 1124.3,814.5 1116,819.7" fill="#1e8cff"/><polygon points="1127,809.3 1135.3,814.5 1127,819.7" fill="#1e8cff"/><polygon points="1138,809.3 1146.3,814.5 1138,819.7" fill="#1e8cff"/><polygon points="1149,809.3 1157.3,814.5 1149,819.7" fill="#1e8cff"/><polygon points="1160,809.3 1168.3,814.5 1160,819.7" fill="#1e8cff"/><polygon points="1171,809.3 1179.3,814.5 1171,819.7" fill="#1e8cff"/><polygon points="1182,809.3 1190.3,814.5 1182,819.7" fill="#1e8cff"/><polygon points="1193,809.3 1201.3,814.5 1193,819.7" fill="#1e8cff"/><polygon points="1204,809.3 1212.3,814.5 1204,819.7" fill="#1e8cff"/><polygon points="1215,809.3 1223.3,814.5 1215,819.7" fill="#1e8cff"/><polygon points="1226,809.3 1234.3,814.5 1226,819.7" fill="#1e8cff"/><polygon points="1237,809.3 1245.3,814.5 1237,819.7" fill="#1e8cff"/><polygon points="1248,809.3 1256.3,814.5 1248,819.7" fill="#1e8cff"/><polygon points="1259,809.3 1267.3,814.5 1259,819.7" fill="#1e8cff"/><polygon points="1270,809.3 1278.3,814.5 1270,819.7" fill="#1e8cff"/><polygon points="1281,809.3 1289.3,814.5 1281,819.7" fill="#1e8cff"/><polygon points="1292,809.3 1300.3,814.5 1292,819.7" fill="#1e8cff"/><polygon points="1303,809.3 1311.3,814.5 1303,819.7" fill="#1e8cff"/><polygon points="1314,809.3 1322.3,814.5 1314,819.7" fill="#1e8cff"/><polygon points="1325,809.3 1333.3,814.5 1325,819.7" fill="#1e8cff"/><polygon points="1336,809.3 1344.3,814.5 1336,819.7" fill="#1e8cff"/><polygon points="1347,809.3 1355.3,814.5 1347,819.7" fill="#1e8cff"/><polygon points="1358,809.3 1366.3,814.5 1358,819.7" fill="#1e8cff"/><polygon points="1369,809.3 1377.3,814.5 1369,819.7" fill="#1e8cff"/><polygon points="1380,809.3 1388.3,814.5 1380,819.7" fill="#1e8cff"/><polygon points="1391,809.3 1399.3,814.5 1391,819.7" fill="#1e8cff"/><polygon points="1402,809.3 1410.3,814.5 1402,819.7" fill="#1e8cff"/><polygon points="1413,809.3 1421.3,814.5 1413,819.7" fill="#1e8cff"/><polygon points="1424,809.3 1432.3,814.5 1424,819.7" fill="#1e8cff"/><polygon points="1435,809.3 1443.3,814.5 1435,819.7" fill="#1e8cff"/><polygon points="1446,809.3 1454.3,814.5 1446,819.7" fill="#1e8cff"/><polygon points="1457,809.3 1465.3,814.5 1457,819.7" fill="#1e8cff"/><polygon points="1468,809.3 1476.3,814.5 1468,819.7" fill="#1e8cff"/><polygon points="1479,809.3 1487.3,814.5 1479,819.7" fill="#1e8cff"/><polygon points="1490,809.3 1498.3,814.5 1490,819.7" fill="#1e8cff"/><polygon points="1501,809.3 1509.3,814.5 1501,819.7" fill="#1e8cff"/><polygon points="1512,809.3 1520.3,814.5 1512,819.7" fill="#1e8cff"/><polygon points="1523,809.3 1531.3,814.5 1523,819.7" fill="#1e8cff"/><polygon points="1542.2,808.16 1550.5,813.36 1542.2,818.56" fill="#1e8cff"/><polygon points="1561.35,804.79 1556.15,813.09 1550.95,804.79" fill="#1e8cff"/><polygon points="1568.06,806.42 1559.76,801.22 1568.06,796.02" fill="#1e8cff"/><polygon points="1563.86,795.48 1569.06,787.18 1574.26,795.48" fill="#1e8cff"/><polygon points="1565.3,776.8 1570.5,768.5 1575.7,776.8" fill="#1e8cff"/><polygon points="1565.3,765.8 1570.5,757.5 1575.7,765.8" fill="#1e8cff"/><polygon points="1565.3,754.8 1570.5,746.5 1575.7,754.8" fill="#1e8cff"/><polygon points="1565.3,743.8 1570.5,735.5 1575.7,743.8" fill="#1e8cff"/><polygon points="1565.3,732.8 1570.5,724.5 1575.7,732.8" fill="#1e8cff"/><polygon points="1565.3,721.8 1570.5,713.5 1575.7,721.8" fill="#1e8cff"/><polygon points="1565.3,710.8 1570.5,702.5 1575.7,710.8" fill="#1e8cff"/><polygon points="1565.3,699.8 1570.5,691.5 1575.7,699.8" fill="#1e8cff"/><polygon points="1565.3,688.8 1570.5,680.5 1575.7,688.8" fill="#1e8cff"/><polygon points="1565.3,677.8 1570.5,669.5 1575.7,677.8" fill="#1e8cff"/><polygon points="1565.3,666.8 1570.5,658.5 1575.7,666.8" fill="#1e8cff"/><polygon points="1565.3,655.8 1570.5,647.5 1575.7,655.8" fill="#1e8cff"/><polygon points="1565.3,644.8 1570.5,636.5 1575.7,644.8" fill="#1e8cff"/><polygon points="1565.3,633.8 1570.5,625.5 1575.7,633.8" fill="#1e8cff"/><polygon points="1565.3,622.8 1570.5,614.5 1575.7,622.8" fill="#1e8cff"/><polygon points="1565.3,611.8 1570.5,603.5 1575.7,611.8" fill="#1e8cff"/><polygon points="1565.3,600.8 1570.5,592.5 1575.7,600.8" fill="#1e8cff"/><polygon points="1565.3,589.8 1570.5,581.5 1575.7,589.8" fill="#1e8cff"/><polygon points="1565.3,578.8 1570.5,570.5 1575.7,578.8" fill="#1e8cff"/>
<path d="M942.4 781.5L928.4 781.5M968.4 807.5L968.4 821.5M1537.6 807.5L1537.6 821.5M1563.6 781.5L1577.6 781.5" stroke="#6a6a6a" stroke-width="0.8" fill="none"/>
<path d="M1591 552L1767.6 552" stroke="#8f8f8f" stroke-width="17" fill="none"/>
<path d="M1591 552L1767.6 552" stroke="#454545" stroke-width="13" fill="none"/>
<polygon points="1588.6,546.8 1596.9,552 1588.6,557.2" fill="#1e8cff"/><polygon points="1599.6,546.8 1607.9,552 1599.6,557.2" fill="#1e8cff"/><polygon points="1610.6,546.8 1618.9,552 1610.6,557.2" fill="#1e8cff"/><polygon points="1621.6,546.8 1629.9,552 1621.6,557.2" fill="#1e8cff"/><polygon points="1632.6,546.8 1640.9,552 1632.6,557.2" fill="#1e8cff"/><polygon points="1643.6,546.8 1651.9,552 1643.6,557.2" fill="#1e8cff"/><polygon points="1654.6,546.8 1662.9,552 1654.6,557.2" fill="#1e8cff"/><polygon points="1665.6,546.8 1673.9,552 1665.6,557.2" fill="#1e8cff"/><polygon points="1676.6,546.8 1684.9,552 1676.6,557.2" fill="#1e8cff"/><polygon points="1687.6,546.8 1695.9,552 1687.6,557.2" fill="#1e8cff"/><polygon points="1698.6,546.8 1706.9,552 1698.6,557.2" fill="#1e8cff"/><polygon points="1709.6,546.8 1717.9,552 1709.6,557.2" fill="#1e8cff"/><polygon points="1720.6,546.8 1728.9,552 1720.6,557.2" fill="#1e8cff"/><polygon points="1731.6,546.8 1739.9,552 1731.6,557.2" fill="#1e8cff"/><polygon points="1742.6,546.8 1750.9,552 1742.6,557.2" fill="#1e8cff"/><polygon points="1753.6,546.8 1761.9,552 1753.6,557.2" fill="#1e8cff"/>
<rect x="363" y="449.5" width="138.4" height="248.3" fill="url(#tank)" stroke="#8a8a8a" stroke-width="0.8"/>
<g>
<rect x="553" y="431" width="52" height="20" rx="6" fill="#333"/>
<rect x="553" y="447" width="52" height="61" rx="2" fill="#151515"/>
<g fill="#2e2e2e"><rect x="556" y="449" width="2.5" height="57"/><rect x="561.5" y="449" width="2" height="57"/><rect x="566.5" y="449" width="2" height="57"/><rect x="571.5" y="449" width="2" height="57"/><rect x="576.5" y="449" width="2" height="57"/><rect x="581.5" y="449" width="2" height="57"/><rect x="586.5" y="449" width="2" height="57"/><rect x="591.5" y="449" width="2" height="57"/><rect x="596.5" y="449" width="2" height="57"/><rect x="601" y="449" width="2.5" height="57"/></g>
<rect x="557.5" y="508.5" width="45" height="11.5" rx="2" fill="#3e3e3e"/>
<rect x="562" y="510" width="8" height="3" fill="#5a5a5a"/><rect x="589" y="510" width="8" height="3" fill="#5a5a5a"/>
<rect x="566" y="520" width="27.5" height="21" fill="#4c5252"/>
<rect x="566.5" y="521" width="4" height="17" fill="#c4c4c4"/><rect x="589" y="521" width="4" height="17" fill="#c4c4c4"/>
<rect x="577" y="520" width="6" height="21" fill="#3a3a3a"/>
<path d="M566 541 L593.5 541 L602.5 546 L602.5 557.5 L557.5 557.5 L557.5 546 Z" fill="#4c4c4c"/>
<rect x="560" y="545" width="4" height="3" fill="#7a7a7a"/><rect x="596" y="545" width="4" height="3" fill="#7a7a7a"/>
<rect x="558" y="557" width="43.5" height="7" rx="1.5" fill="#363636"/>
<rect x="560.5" y="564" width="38.5" height="97" fill="url(#steel)"/>
<rect x="557.5" y="658" width="44" height="4" fill="#444"/>
<rect x="557.5" y="661" width="44" height="25" rx="3" fill="#171717"/>
</g>
<rect x="927" y="347.5" width="39" height="402.5" fill="url(#memback)"/>
<rect x="924.6" y="343.5" width="43.5" height="4" fill="url(#flange)"/>
<rect x="924.6" y="750" width="43.5" height="4" fill="url(#memback)"/>
<rect x="965" y="347.5" width="1" height="402.5" fill="#1a2630"/>
<rect x="921.5" y="354.5" width="39" height="402.5" fill="url(#memback)"/>
<rect x="919.1" y="350.5" width="43.5" height="4" fill="url(#flange)"/>
<rect x="919.1" y="757" width="43.5" height="4" fill="url(#memback)"/>
<rect x="959.5" y="354.5" width="1" height="402.5" fill="#1a2630"/>
<rect x="916" y="361.5" width="39" height="402.5" fill="url(#memA)"/>
<path d="M916 361.5 L953 361.5 L920 764 L916 764 Z" fill="url(#memB)"/>
<rect x="953.5" y="361.5" width="1.5" height="402.5" fill="#1c2a34"/>
<rect x="913.6" y="357.5" width="43.5" height="4" fill="url(#flange)"/>
<rect x="913.6" y="764" width="43.5" height="4" fill="url(#memA)"/>
<rect x="909" y="368" width="7.5" height="17" fill="url(#port)"/>
<rect x="909" y="741" width="7.5" height="16" fill="url(#port)"/>
<rect x="927.3" y="768" width="16.3" height="8" fill="url(#portv)"/>
<rect x="297.5" y="734.5" width="29" height="29" rx="4" fill="url(#valve)" stroke="#8a8a8a" stroke-width="1.5"/>
<path d="M302 747.5 L311.5 752 L302 757 Z M321 747.5 L311.5 752 L321 757 Z" fill="#8f9090"/>
<rect x="310.5" y="744" width="2" height="8" fill="#8f9090"/><rect x="307.5" y="739" width="8" height="2" rx="1" fill="#8f9090"/><rect x="308" y="742" width="7" height="1.8" rx="0.9" fill="#8f9090"/><rect x="308" y="745" width="7" height="1.8" rx="0.9" fill="#8f9090"/>
<rect x="1579" y="543.5" width="7.5" height="16" fill="url(#tside)" stroke="#777" stroke-width="0.6"/>
<rect x="1561.3" y="535.5" width="18" height="32.5" fill="url(#tbody)" stroke="#7a7a7a" stroke-width="0.8"/>
<rect x="75.3" y="278.3" width="6.4" height="20.4" rx="2" fill="#fff" stroke="#8a8a8a" stroke-width="1.2"/>
<rect x="421.7" y="442.5" width="20.6" height="5.7" rx="2" fill="#fff" stroke="#8a8a8a" stroke-width="1.2"/>
<rect x="465.6" y="442.5" width="20.7" height="5.7" rx="2" fill="#fff" stroke="#8a8a8a" stroke-width="1.2"/>
<rect x="377.8" y="442.5" width="20.7" height="5.7" rx="2" fill="#fff" stroke="#8a8a8a" stroke-width="1.2"/>
<rect x="503.3" y="662.3" width="5.4" height="20.4" rx="2" fill="#fff" stroke="#8a8a8a" stroke-width="1.2"/>
<rect x="553.3" y="662.3" width="5.4" height="20.4" rx="2" fill="#fff" stroke="#8a8a8a" stroke-width="1.2"/>
<rect x="601.8" y="662.3" width="5.4" height="20.4" rx="2" fill="#fff" stroke="#8a8a8a" stroke-width="1.2"/>
<rect x="903.3" y="366.3" width="5.4" height="20.4" rx="2" fill="#fff" stroke="#8a8a8a" stroke-width="1.2"/>
<rect x="903.3" y="738.3" width="5.4" height="20.4" rx="2" fill="#fff" stroke="#8a8a8a" stroke-width="1.2"/>
<rect x="925.3" y="775.9" width="20.1" height="4.8" rx="2" fill="#fff" stroke="#8a8a8a" stroke-width="1.2"/>
<rect x="290.7" y="738.6" width="4.4" height="20.5" rx="2" fill="#fff" stroke="#8a8a8a" stroke-width="1.2"/>
<rect x="328.2" y="738.6" width="4.5" height="20.5" rx="2" fill="#fff" stroke="#8a8a8a" stroke-width="1.2"/>
<rect x="301.1" y="727.9" width="20.5" height="5.1" rx="2" fill="#fff" stroke="#8a8a8a" stroke-width="1.2"/>
<rect x="71.7" y="837.1" width="20.3" height="5" rx="2" fill="#fff" stroke="#8a8a8a" stroke-width="1.2"/>
<rect x="1560.5" y="531.3" width="19.9" height="4.7" rx="2" fill="#fff" stroke="#8a8a8a" stroke-width="1.2"/>
<rect x="1560.5" y="567.9" width="19.9" height="5.1" rx="2" fill="#fff" stroke="#8a8a8a" stroke-width="1.2"/>
<rect x="1586.3" y="542.1" width="4.7" height="19.6" rx="2" fill="#fff" stroke="#8a8a8a" stroke-width="1.2"/>
<rect x="1767.9" y="541.6" width="5.4" height="20.7" rx="2" fill="#fff" stroke="#8a8a8a" stroke-width="1.2"/>
<rect x="161" y="299" width="5.5" height="12" fill="#8a8a8a"/>
<rect x="158.3" y="278.3" width="10" height="20.4" rx="3" fill="#fff" stroke="#8a8a8a" stroke-width="1.2"/>
<rect x="161" y="727" width="5.5" height="12.3" fill="#8a8a8a"/>
<rect x="159.5" y="739.6" width="8.6" height="19.1" rx="3" fill="#fff" stroke="#8a8a8a" stroke-width="1.2"/>
<rect x="719" y="650" width="6" height="12.2" fill="#8a8a8a"/>
<rect x="717.3" y="662.5" width="10.2" height="19.7" rx="3" fill="#fff" stroke="#8a8a8a" stroke-width="1.2"/>
<rect x="1080.8" y="792" width="5.4" height="12.6" fill="#8a8a8a"/>
<rect x="1078.6" y="804.9" width="9.5" height="20.2" rx="3" fill="#fff" stroke="#8a8a8a" stroke-width="1.2"/>
<rect x="1267" y="792" width="5" height="12.6" fill="#8a8a8a"/>
<rect x="1264.7" y="804.9" width="9.5" height="20.2" rx="3" fill="#fff" stroke="#8a8a8a" stroke-width="1.2"/>
<rect x="1548" y="445.2" width="12.2" height="5.4" fill="#8a8a8a"/>
<rect x="1560.5" y="443.5" width="19.9" height="9" rx="3" fill="#fff" stroke="#8a8a8a" stroke-width="1.2"/>
<rect x="1548" y="653" width="12" height="5.8" fill="#8a8a8a"/>
<rect x="1560.2" y="650.1" width="20.3" height="10.4" rx="3" fill="#fff" stroke="#8a8a8a" stroke-width="1.2"/>
<rect x="1682.9" y="529" width="5.1" height="46" fill="#8a8a8a"/>
<rect x="1680.3" y="541.6" width="10.2" height="20.7" rx="3" fill="#fff" stroke="#8a8a8a" stroke-width="1.2"/>
<rect x="82.75" y="311.75" width="163" height="163" rx="13" fill="#454545" stroke="#8c8c8c" stroke-width="1.5"/>
<path d="M111.55 414.01A56.5 56.5 0 0 1 185.01 340.55" stroke="#386a38" stroke-width="2.7" fill="none"/>
<path d="M186.24 341.06A56.5 56.5 0 0 1 216.45 414.01" stroke="#7d3535" stroke-width="2.7" fill="none"/>
<path d="M116.42 412.71A51.5 51.5 0 0 1 112.51 394.08L133.51 393.64A30.5 30.5 0 0 0 135.82 404.67Z" fill="#22a822"/>
<text x="107.26" y="424.72" text-anchor="end" font-size="10" fill="#b4b4b4">0</text>
<text x="187.92" y="333.26" text-anchor="start" font-size="10" fill="#b4b4b4">3K</text>
<text x="221.74" y="424.72" text-anchor="start" font-size="10" fill="#b4b4b4">5K</text>
<circle cx="164" cy="393" r="10" fill="#000"/>
<line x1="185.4" y1="392.16" x2="112.41" y2="393.69" stroke="#000" stroke-width="4"/>
<line x1="184.85" y1="392.71" x2="111.86" y2="394.24" stroke="#fff" stroke-width="2"/>
<text x="164" y="440" text-anchor="middle" font-size="19.2" fill="#fff" stroke="#fff" stroke-width="0.55">473.2 l/h</text>
<text x="164" y="461" text-anchor="middle" font-size="13.5" fill="#9c9c9c">Inlet water flow</text>
<rect x="82.75" y="563.75" width="163" height="163" rx="13" fill="#454545" stroke="#8c8c8c" stroke-width="1.5"/>
<path d="M111.55 666.01A56.5 56.5 0 0 1 210.6 613.06" stroke="#386a38" stroke-width="2.7" fill="none"/>
<path d="M211.34 614.17A56.5 56.5 0 0 1 216.45 666.01" stroke="#9a7030" stroke-width="2.7" fill="none"/>
<path d="M116.42 664.71A51.5 51.5 0 0 1 113.16 653.23L133.89 649.87A30.5 30.5 0 0 0 135.82 656.67Z" fill="#22a822"/>
<text x="107.26" y="676.72" text-anchor="end" font-size="10" fill="#b4b4b4">0</text>
<text x="215.97" y="608.28" text-anchor="start" font-size="10" fill="#b4b4b4">1500</text>
<text x="221.74" y="676.72" text-anchor="start" font-size="10" fill="#b4b4b4">2K</text>
<circle cx="164" cy="645" r="10" fill="#000"/>
<line x1="185.13" y1="641.25" x2="113.07" y2="652.91" stroke="#000" stroke-width="4"/>
<line x1="184.58" y1="641.8" x2="112.52" y2="653.46" stroke="#fff" stroke-width="2"/>
<text x="164" y="692" text-anchor="middle" font-size="19.2" fill="#fff" stroke="#fff" stroke-width="0.55">118.3 l/h</text>
<text x="164" y="713" text-anchor="middle" font-size="13.5" fill="#9c9c9c">Concentrate to drain</text>
<rect x="640.75" y="486.75" width="163" height="163" rx="13" fill="#454545" stroke="#8c8c8c" stroke-width="1.5"/>
<path d="M669.55 589.01A56.5 56.5 0 0 1 721.33 511.5" stroke="#9a7030" stroke-width="2.7" fill="none"/>
<path d="M722.67 511.5A56.5 56.5 0 0 1 761.48 527.58" stroke="#386a38" stroke-width="2.7" fill="none"/>
<path d="M762.42 528.52A56.5 56.5 0 0 1 773.94 545.76" stroke="#9a7030" stroke-width="2.7" fill="none"/>
<path d="M774.45 546.99A56.5 56.5 0 0 1 774.45 589.01" stroke="#7d3535" stroke-width="2.7" fill="none"/>
<path d="M674.42 587.71A51.5 51.5 0 0 1 733.04 517.7L728.54 538.21A30.5 30.5 0 0 0 693.82 579.67Z" fill="#22a822"/>
<text x="665.26" y="599.72" text-anchor="end" font-size="10" fill="#b4b4b4">0</text>
<text x="722" y="503.5" text-anchor="start" font-size="10" fill="#b4b4b4">10</text>
<text x="766.19" y="521.81" text-anchor="start" font-size="10" fill="#b4b4b4">14</text>
<text x="779.74" y="542.08" text-anchor="start" font-size="10" fill="#b4b4b4">16</text>
<text x="779.74" y="599.72" text-anchor="start" font-size="10" fill="#b4b4b4">20</text>
<circle cx="722" cy="568" r="10" fill="#000"/>
<line x1="717.9" y1="588.11" x2="733.54" y2="516.81" stroke="#000" stroke-width="4"/>
<line x1="717.35" y1="588.66" x2="732.99" y2="517.36" stroke="#fff" stroke-width="2"/>
<text x="722" y="615" text-anchor="middle" font-size="19.2" fill="#fff" stroke="#fff" stroke-width="0.55">11.1 bar</text>
<text x="722" y="636" text-anchor="middle" font-size="13.5" fill="#9c9c9c">RO pressure 1</text>
<rect x="1001.75" y="366.75" width="163" height="163" rx="13" fill="#454545" stroke="#8c8c8c" stroke-width="1.5"/>
<path d="M1030.55 469.01A56.5 56.5 0 0 1 1082.33 391.5" stroke="#7d3535" stroke-width="2.7" fill="none"/>
<path d="M1083.67 391.5A56.5 56.5 0 0 1 1113.83 400.66" stroke="#9a7030" stroke-width="2.7" fill="none"/>
<path d="M1114.94 401.4A56.5 56.5 0 0 1 1135.45 469.01" stroke="#386a38" stroke-width="2.7" fill="none"/>
<path d="M1035.42 467.71A51.5 51.5 0 0 1 1125.82 419.39L1108.36 431.06A30.5 30.5 0 0 0 1054.82 459.67Z" fill="#22a822"/>
<text x="1026.26" y="479.72" text-anchor="end" font-size="10" fill="#b4b4b4">0</text>
<text x="1083" y="383.5" text-anchor="start" font-size="10" fill="#b4b4b4">50</text>
<text x="1117.72" y="394.03" text-anchor="start" font-size="10" fill="#b4b4b4">65</text>
<text x="1140.74" y="479.72" text-anchor="start" font-size="10" fill="#b4b4b4">100</text>
<circle cx="1083" cy="448" r="10" fill="#000"/>
<line x1="1065.94" y1="459.27" x2="1126.64" y2="418.71" stroke="#000" stroke-width="4"/>
<line x1="1065.39" y1="459.82" x2="1126.09" y2="419.26" stroke="#fff" stroke-width="2"/>
<text x="1083" y="495" text-anchor="middle" font-size="19.2" fill="#fff" stroke="#fff" stroke-width="0.55">75 %</text>
<text x="1083" y="516" text-anchor="middle" font-size="13.5" fill="#9c9c9c">Yield</text>
<rect x="1001.75" y="629.75" width="163" height="163" rx="13" fill="#454545" stroke="#8c8c8c" stroke-width="1.5"/>
<path d="M1030.55 732.01A56.5 56.5 0 0 1 1030.55 689.99" stroke="#9a7030" stroke-width="2.7" fill="none"/>
<path d="M1031.06 688.76A56.5 56.5 0 0 1 1115.67 664.9" stroke="#386a38" stroke-width="2.7" fill="none"/>
<path d="M1116.75 665.68A56.5 56.5 0 0 1 1130.82 680.91" stroke="#9a7030" stroke-width="2.7" fill="none"/>
<path d="M1131.52 682.05A56.5 56.5 0 0 1 1135.45 732.01" stroke="#7d3535" stroke-width="2.7" fill="none"/>
<path d="M1035.42 730.71A51.5 51.5 0 0 1 1074.54 660.2L1077.99 680.91A30.5 30.5 0 0 0 1054.82 722.67Z" fill="#22a822"/>
<text x="1026.26" y="742.72" text-anchor="end" font-size="10" fill="#b4b4b4">0</text>
<text x="1026.26" y="685.08" text-anchor="end" font-size="10" fill="#b4b4b4">10</text>
<text x="1119.74" y="658.44" text-anchor="start" font-size="10" fill="#b4b4b4">33</text>
<text x="1136.29" y="676.34" text-anchor="start" font-size="10" fill="#b4b4b4">38</text>
<text x="1140.74" y="742.72" text-anchor="start" font-size="10" fill="#b4b4b4">50</text>
<circle cx="1083" cy="711" r="10" fill="#000"/>
<line x1="1086.85" y1="731.32" x2="1074.86" y2="659.31" stroke="#000" stroke-width="4"/>
<line x1="1086.3" y1="731.87" x2="1074.31" y2="659.86" stroke="#fff" stroke-width="2"/>
<text x="1083" y="758" text-anchor="middle" font-size="19.2" fill="#fff" stroke="#fff" stroke-width="0.55">22.9 &#186;C</text>
<text x="1083" y="779" text-anchor="middle" font-size="13.5" fill="#9c9c9c">Permeate temperature</text>
<rect x="1187.75" y="629.75" width="163" height="163" rx="13" fill="#454545" stroke="#8c8c8c" stroke-width="1.5"/>
<path d="M1216.55 732.01A56.5 56.5 0 0 1 1228.58 671.52" stroke="#386a38" stroke-width="2.7" fill="none"/>
<path d="M1229.52 670.58A56.5 56.5 0 0 1 1321.45 732.01" stroke="#7d3535" stroke-width="2.7" fill="none"/>
<path d="M1221.42 730.71A51.5 51.5 0 0 1 1217.6 714.23L1238.56 712.92A30.5 30.5 0 0 0 1240.82 722.67Z" fill="#22a822"/>
<text x="1212.26" y="742.72" text-anchor="end" font-size="10" fill="#b4b4b4">0</text>
<text x="1225.81" y="664.81" text-anchor="end" font-size="10" fill="#b4b4b4">15</text>
<text x="1326.74" y="742.72" text-anchor="start" font-size="10" fill="#b4b4b4">50</text>
<circle cx="1269" cy="711" r="10" fill="#000"/>
<line x1="1290.36" y1="709.28" x2="1217.5" y2="713.87" stroke="#000" stroke-width="4"/>
<line x1="1289.81" y1="709.83" x2="1216.95" y2="714.42" stroke="#fff" stroke-width="2"/>
<text x="1269" y="758" text-anchor="middle" font-size="19.2" fill="#fff" stroke="#fff" stroke-width="0.55">4.2 &#956;S/cm</text>
<text x="1269" y="779" text-anchor="middle" font-size="13.5" fill="#9c9c9c">Permeate quality</text>
<rect x="1384.75" y="366.75" width="163" height="163" rx="13" fill="#454545" stroke="#8c8c8c" stroke-width="1.5"/>
<path d="M1413.55 469.01A56.5 56.5 0 1 1 1518.45 469.01" stroke="#386a38" stroke-width="2.7" fill="none"/>
<path d="M1418.42 467.71A51.5 51.5 0 0 1 1446.11 400.5L1454.22 419.87A30.5 30.5 0 0 0 1437.82 459.67Z" fill="#22a822"/>
<text x="1409.26" y="479.72" text-anchor="end" font-size="10" fill="#b4b4b4">0</text>
<text x="1523.74" y="479.72" text-anchor="start" font-size="10" fill="#b4b4b4">3K</text>
<circle cx="1466" cy="448" r="10" fill="#000"/>
<line x1="1474.51" y1="466.97" x2="1446.31" y2="399.64" stroke="#000" stroke-width="4"/>
<line x1="1473.96" y1="467.52" x2="1445.76" y2="400.19" stroke="#fff" stroke-width="2"/>
<text x="1466" y="495" text-anchor="middle" font-size="19.2" fill="#fff" stroke="#fff" stroke-width="0.55">1197 l/h</text>
<text x="1466" y="516" text-anchor="middle" font-size="13.5" fill="#9c9c9c">Permeate back flow</text>
<rect x="1603.75" y="366.75" width="163" height="163" rx="13" fill="#454545" stroke="#8c8c8c" stroke-width="1.5"/>
<path d="M1632.55 469.01A56.5 56.5 0 0 1 1629.46 437.63" stroke="#7d3535" stroke-width="2.7" fill="none"/>
<path d="M1629.72 436.33A56.5 56.5 0 0 1 1684.33 391.5" stroke="#386a38" stroke-width="2.7" fill="none"/>
<path d="M1685.67 391.5A56.5 56.5 0 0 1 1706.01 395.55" stroke="#9a7030" stroke-width="2.7" fill="none"/>
<path d="M1707.24 396.06A56.5 56.5 0 0 1 1737.45 469.01" stroke="#7d3535" stroke-width="2.7" fill="none"/>
<path d="M1637.42 467.71A51.5 51.5 0 0 1 1648.58 411.58L1663.43 426.43A30.5 30.5 0 0 0 1656.82 459.67Z" fill="#22a822"/>
<text x="1628.26" y="479.72" text-anchor="end" font-size="10" fill="#b4b4b4">0</text>
<text x="1624.7" y="433.81" text-anchor="end" font-size="10" fill="#b4b4b4">1.5</text>
<text x="1685" y="383.5" text-anchor="start" font-size="10" fill="#b4b4b4">5</text>
<text x="1708.92" y="388.26" text-anchor="start" font-size="10" fill="#b4b4b4">6</text>
<text x="1742.74" y="479.72" text-anchor="start" font-size="10" fill="#b4b4b4">10</text>
<circle cx="1685" cy="448" r="10" fill="#000"/>
<line x1="1700.25" y1="462.45" x2="1648.63" y2="410.83" stroke="#000" stroke-width="4"/>
<line x1="1699.7" y1="463" x2="1648.08" y2="411.38" stroke="#fff" stroke-width="2"/>
<text x="1685" y="495" text-anchor="middle" font-size="19.2" fill="#fff" stroke="#fff" stroke-width="0.55">3 bar</text>
<text x="1685" y="516" text-anchor="middle" font-size="13.5" fill="#9c9c9c">Loop pressure</text>
<rect x="1384.75" y="574.75" width="163" height="163" rx="13" fill="#454545" stroke="#8c8c8c" stroke-width="1.5"/>
<path d="M1413.55 677.01A56.5 56.5 0 0 1 1410.91 643.46" stroke="#9a7030" stroke-width="2.7" fill="none"/>
<path d="M1411.22 642.16A56.5 56.5 0 1 1 1518.45 677.01" stroke="#386a38" stroke-width="2.7" fill="none"/>
<path d="M1418.42 675.71A51.5 51.5 0 0 1 1428.34 620.87L1443.7 635.2A30.5 30.5 0 0 0 1437.82 667.67Z" fill="#22a822"/>
<text x="1409.26" y="687.72" text-anchor="end" font-size="10" fill="#b4b4b4">0</text>
<text x="1406.23" y="639.41" text-anchor="end" font-size="10" fill="#b4b4b4">800</text>
<text x="1523.74" y="687.72" text-anchor="start" font-size="10" fill="#b4b4b4">5K</text>
<circle cx="1466" cy="656" r="10" fill="#000"/>
<line x1="1481.76" y1="669.92" x2="1428.37" y2="620.13" stroke="#000" stroke-width="4"/>
<line x1="1481.21" y1="670.47" x2="1427.82" y2="620.68" stroke="#fff" stroke-width="2"/>
<text x="1466" y="703" text-anchor="middle" font-size="19.2" fill="#fff" stroke="#fff" stroke-width="0.55">1455.7 l/h</text>
<text x="1466" y="724" text-anchor="middle" font-size="13.5" fill="#9c9c9c">Permeate production</text>
<rect x="1603.75" y="574.75" width="163" height="163" rx="13" fill="#454545" stroke="#8c8c8c" stroke-width="1.5"/>
<path d="M1632.55 677.01A56.5 56.5 0 1 1 1737.45 677.01" stroke="#386a38" stroke-width="2.7" fill="none"/>
<path d="M1637.42 675.71A51.5 51.5 0 0 1 1634.42 665.7L1655.05 661.75A30.5 30.5 0 0 0 1656.82 667.67Z" fill="#22a822"/>
<text x="1628.26" y="687.72" text-anchor="end" font-size="10" fill="#b4b4b4">0</text>
<text x="1742.74" y="687.72" text-anchor="start" font-size="10" fill="#b4b4b4">5K</text>
<circle cx="1685" cy="656" r="10" fill="#000"/>
<line x1="1706.02" y1="651.64" x2="1634.33" y2="665.4" stroke="#000" stroke-width="4"/>
<line x1="1705.47" y1="652.19" x2="1633.78" y2="665.95" stroke="#fff" stroke-width="2"/>
<text x="1685" y="703" text-anchor="middle" font-size="19.2" fill="#fff" stroke="#fff" stroke-width="0.55">258.7 l/h</text>
<text x="1685" y="724" text-anchor="middle" font-size="13.5" fill="#9c9c9c">Permeate consumption</text>
</svg>
</body></html>
